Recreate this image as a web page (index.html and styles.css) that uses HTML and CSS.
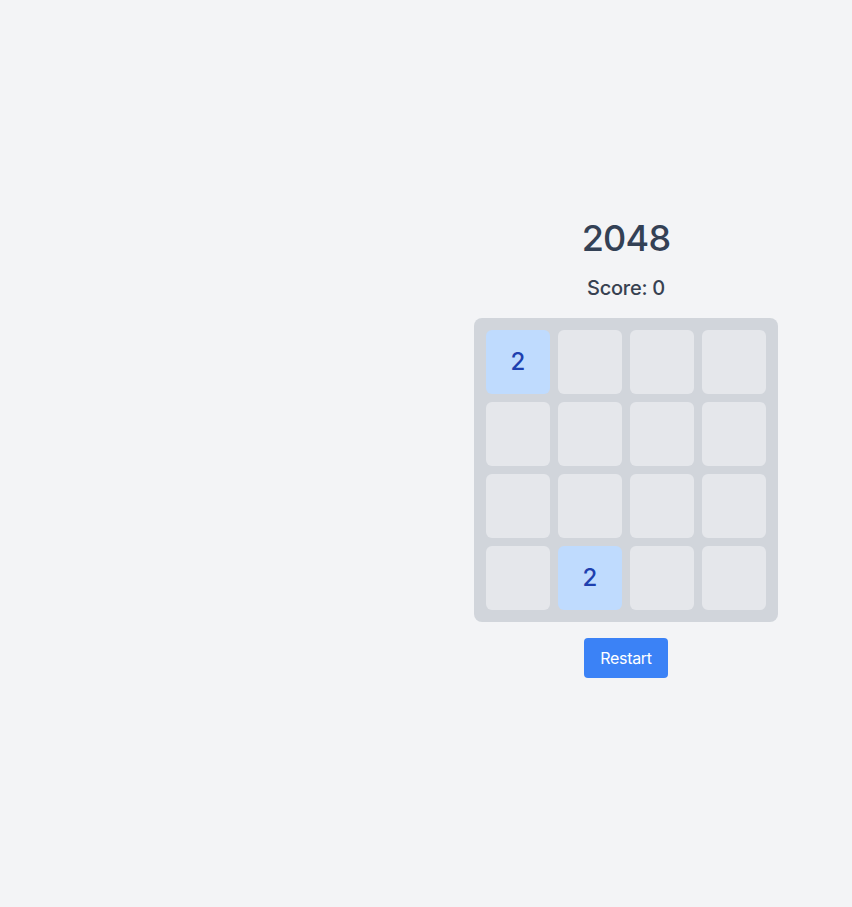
FILE: index.html
```html
<!DOCTYPE html>
<html lang="en">
<head>
<meta charset="utf-8">
<title>2048</title>
<link rel="stylesheet" href="styles.css">
</head>
<body>
<div class="page">
  <div class="spacer"></div>
  <main class="game">
    <h1 class="title">2048</h1>
    <p class="score">Score: 0</p>
    <div class="board">
      <div class="tile tile-2">2</div>
      <div class="tile"></div>
      <div class="tile"></div>
      <div class="tile"></div>
      <div class="tile"></div>
      <div class="tile"></div>
      <div class="tile"></div>
      <div class="tile"></div>
      <div class="tile"></div>
      <div class="tile"></div>
      <div class="tile"></div>
      <div class="tile"></div>
      <div class="tile"></div>
      <div class="tile tile-2">2</div>
      <div class="tile"></div>
      <div class="tile"></div>
    </div>
    <button class="restart" type="button">Restart</button>
  </main>
</div>
</body>
</html>
```
FILE: styles.css
```css
* { box-sizing: border-box; }
html, body { margin: 0; padding: 0; }
body {
  background: #f3f4f6;
  font-family: Inter, "Liberation Sans", sans-serif;
  color: #374151;
}
.page {
  display: flex;
  min-height: 100vh;
  padding-bottom: 12px;
}
.spacer { width: 400px; flex: none; }
.game {
  flex: 1;
  display: flex;
  flex-direction: column;
  align-items: center;
  justify-content: center;
}
.title {
  margin: 0 0 16px;
  font-size: 36px;
  line-height: 40px;
  font-weight: 500;
  letter-spacing: -0.75px;
  color: #334155;
}
.score {
  margin: 0 0 16px;
  font-size: 20px;
  line-height: 28px;
  font-weight: 500;
  letter-spacing: -0.25px;
  color: #374151;
}
.board {
  display: grid;
  grid-template-columns: repeat(4, 64px);
  grid-auto-rows: 64px;
  gap: 8px;
  padding: 12px;
  background: #d1d5db;
  border-radius: 8px;
}
.tile {
  background: #e5e7eb;
  border-radius: 6px;
  display: flex;
  align-items: center;
  justify-content: center;
  font-size: 24px;
  font-weight: 500;
  color: #1e40af;
}
.tile-2 { background: #bfdbfe; }
.restart {
  margin-top: 16px;
  padding: 8px 16px;
  border: 0;
  border-radius: 4px;
  background: #3b82f6;
  color: #fff;
  font-family: inherit;
  font-size: 16px;
  line-height: 24px;
  letter-spacing: -0.3px;
}
```
